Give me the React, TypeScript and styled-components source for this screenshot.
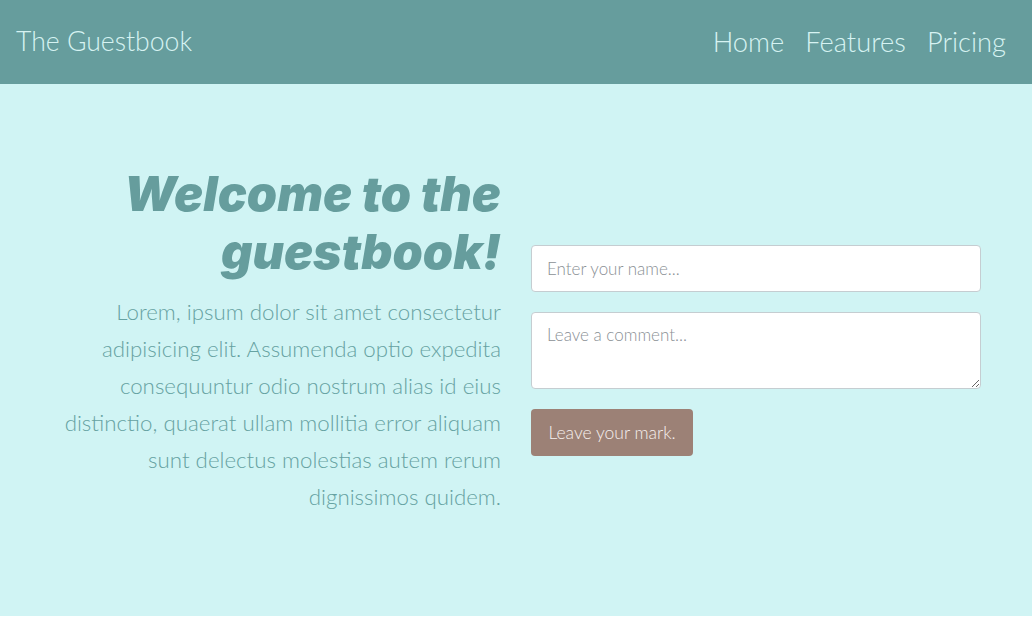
import React from "react";
import styled, { createGlobalStyle } from "styled-components";

const GlobalStyle = createGlobalStyle`
  * { box-sizing: border-box; }
  body {
    margin: 0;
    background: #ffffff;
    font-family: "Lato", "Open Sans", sans-serif;
    font-weight: 300;
  }
`;

const NavBar = styled.header`
  height: 84px;
  background: #669d9d;
  display: flex;
  align-items: center;
  justify-content: space-between;
  padding: 0 26px 0 16px;
`;

const Brand = styled.a`
  font-family: "Lato", sans-serif;
  font-weight: 300;
  font-size: 26.6px;
  color: #d6f3f2;
  text-decoration: none;
  margin-top: -2px;
`;

const NavLinks = styled.nav`
  display: flex;
  gap: 21px;
  align-items: center;
  margin-top: -2px;
`;

const NavLink = styled.a`
  font-family: "Lato", sans-serif;
  font-weight: 300;
  font-size: 27.3px;
  color: #d6f3f2;
  text-decoration: none;
`;

const Hero = styled.section`
  height: 532px;
  background: #d0f4f4;
  display: flex;
  align-items: center;
`;

const Container = styled.div`
  width: 960px;
  margin: 0 auto;
  display: flex;
  align-items: center;
`;

const Column = styled.div<{ $align?: "left" | "right" }>`
  flex: 0 0 50%;
  padding: 0 15px;
  text-align: ${(p) => p.$align ?? "left"};
`;

const Title = styled.h1`
  margin: -4px 0 12px;
  font-family: "Inter", "Roboto", sans-serif;
  font-weight: 900;
  font-style: italic;
  font-size: 48.5px;
  line-height: 58px;
  color: #669d9d;
`;

const Lead = styled.p`
  margin: 0 0 16px;
  font-family: "Lato", sans-serif;
  font-weight: 300;
  font-size: 22.3px;
  line-height: 37px;
  color: #66a2a2;
`;

const Form = styled.form`
  display: flex;
  flex-direction: column;
  align-items: flex-start;
  gap: 20px;
`;

const fieldBase = `
  width: 100%;
  border: 1px solid #c5cdd1;
  border-radius: 4px;
  background: #ffffff;
  font-family: "Lato", sans-serif;
  font-weight: 300;
  font-size: 17px;
  color: #495057;
  outline: none;
  &::placeholder { color: #8a9095; }
`;

const TextInput = styled.input`
  ${fieldBase}
  height: 47px;
  padding: 0 15px;
`;

const TextArea = styled.textarea`
  ${fieldBase}
  height: 77px;
  padding: 11px 15px;
  resize: vertical;
  display: block;
`;

const SubmitButton = styled.button`
  height: 47px;
  padding: 0 17.5px;
  border: none;
  border-radius: 4px;
  background: #9c8176;
  color: #f6f0ee;
  font-family: "Lato", sans-serif;
  font-weight: 300;
  font-size: 17.5px;
  cursor: pointer;
`;

export default function App() {
  return (
    <>
      <GlobalStyle />
      <NavBar>
        <Brand href="#">The Guestbook</Brand>
        <NavLinks>
          <NavLink href="#">Home</NavLink>
          <NavLink href="#">Features</NavLink>
          <NavLink href="#">Pricing</NavLink>
        </NavLinks>
      </NavBar>
      <Hero>
        <Container>
          <Column $align="right">
            <Title>
              Welcome to the
              <br />
              guestbook!
            </Title>
            <Lead>
              Lorem, ipsum dolor sit amet consectetur adipisicing elit. Assumenda optio expedita
              consequuntur odio nostrum alias id eius distinctio, quaerat ullam mollitia error
              aliquam sunt delectus molestias autem rerum dignissimos quidem.
            </Lead>
          </Column>
          <Column>
            <Form onSubmit={(e) => e.preventDefault()}>
              <TextInput type="text" placeholder="Enter your name..." />
              <TextArea placeholder="Leave a comment..." />
              <SubmitButton type="submit">Leave your mark.</SubmitButton>
            </Form>
          </Column>
        </Container>
      </Hero>
    </>
  );
}
